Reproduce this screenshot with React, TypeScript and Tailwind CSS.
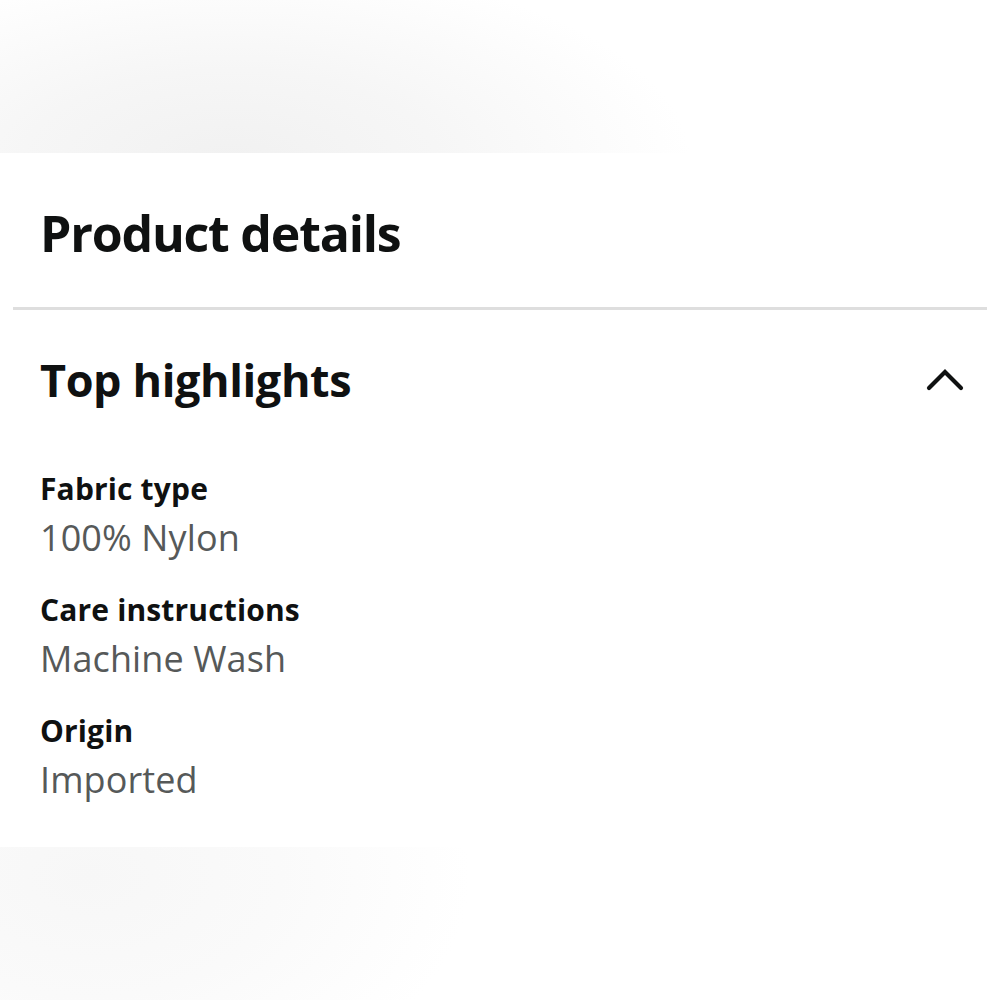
import React from 'react';

const highlights = [
  { label: 'Fabric type', value: '100% Nylon' },
  { label: 'Care instructions', value: 'Machine Wash' },
  { label: 'Origin', value: 'Imported' },
];

const ChevronUp = () => (
  <svg width="38" height="26" viewBox="0 0 38 26" fill="none" className="shrink-0">
    <polyline points="3,21 19,5 35,21" stroke="#0f1111" strokeWidth="4.2" strokeLinecap="round" strokeLinejoin="miter" />
  </svg>
);

export default function App() {
  return (
    <div className="w-[1000px] h-[1000px] bg-white overflow-hidden flex flex-col font-['Open_Sans',sans-serif]">
      <div className="h-[153px] shrink-0 bg-[radial-gradient(ellipse_460px_200px_at_230px_160px,#f1f1f1_0%,#f6f6f6_45%,#ffffff_100%)]" />

      <div className="h-[694px] shrink-0 bg-white flex flex-col">
        <h2 className="mt-[55px] pl-[40px] text-[50px] leading-none font-bold text-[#0f1111] tracking-[-1.2px]">
          Product details
        </h2>

        <div className="mt-[49px] mx-[13px] h-[3px] bg-[#dedede]" />

        <div className="mt-[47px] pl-[40px] pr-[36px] flex items-center justify-between">
          <h3 className="text-[45px] leading-none font-bold text-[#0f1111] tracking-[-0.4px]">Top highlights</h3>
          <ChevronUp />
        </div>

        <div className="mt-[72px] pl-[40px] flex flex-col gap-[39px]">
          {highlights.map(h => (
            <div key={h.label} className="flex flex-col">
              <span className="text-[30px] leading-none font-bold text-[#0f1111] tracking-[0.15px]">{h.label}</span>
              <span className="mt-[16px] text-[36px] leading-none text-[#565959] tracking-[0.1px]">{h.value}</span>
            </div>
          ))}
        </div>
      </div>

      <div className="flex-1 bg-[radial-gradient(ellipse_380px_240px_at_90px_30px,#f7f7f7_0%,#fafafa_50%,#ffffff_100%)]" />
    </div>
  );
}
